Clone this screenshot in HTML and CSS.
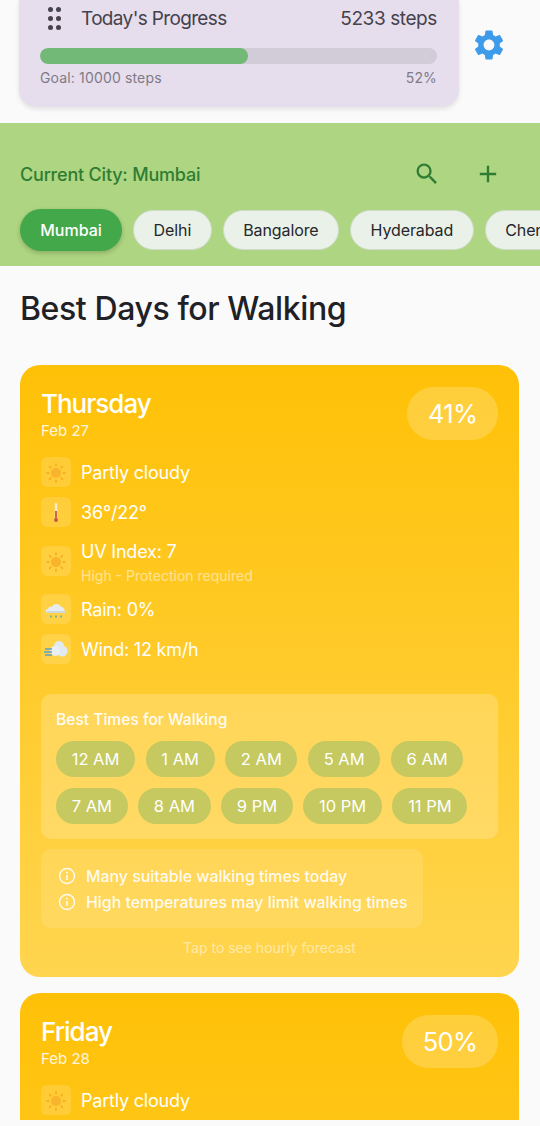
FILE: index.html
```html
<!DOCTYPE html>
<html>
<head>
    <link rel="stylesheet" href="styles.css">
    <title>Best Days for Walking</title>
</head>
<body>
<svg class="defs" width="0" height="0">
    <symbol id="sun" viewBox="0 0 30 30">
        <circle cx="15" cy="16" r="5" fill="#f8b42c"/>
        <g stroke="#f5a623" stroke-width="1.400" stroke-linecap="round">
            <path d="M15 7v1.800M15 23.200V25M6 16h1.800M22.200 16H24M8.600 9.600l1.300 1.300M20.100 21.100l1.300 1.300M21.400 9.600l-1.300 1.300M9.900 21.100l-1.300 1.300"/>
        </g>
    </symbol>
    <symbol id="thermo" viewBox="0 0 30 30">
        <rect x="13.800" y="6" width="2.400" height="18" rx="1.200" fill="#f3e9d8"/>
        <rect x="14.100" y="14" width="1.800" height="9" fill="#c8574b"/>
        <circle cx="15" cy="23" r="2" fill="#c8574b"/>
    </symbol>
    <symbol id="rain" viewBox="0 0 30 30">
        <path d="M7 19c-3 0-3-4 0-4 .5-2 2.500-3 4-2 1-4 8-4 9 0 4-.5 5 6 1 6z" fill="#e6edf2"/>
        <path d="M6 17h18v2H6z" fill="#cfd8de"/>
        <path d="M10 21.500v2M15 21.500v2M20 21.500v2" stroke="#6fb1a8" stroke-width="1.800"/>
    </symbol>
    <symbol id="wind" viewBox="0 0 30 30">
        <circle cx="18" cy="12" r="5" fill="#dfeaf2"/>
        <circle cx="21" cy="17" r="5.500" fill="#dfeaf2"/>
        <circle cx="14" cy="17" r="5" fill="#e9f0f5"/>
        <path d="M4 15h7M3 18h8M4 21h7" stroke="#5f9fc0" stroke-width="1.600"/>
    </symbol>
    <symbol id="info" viewBox="0 0 18 18">
        <circle cx="9" cy="9" r="7.500" fill="none" stroke="currentColor" stroke-width="1.400"/>
        <path d="M9 8v5" stroke="currentColor" stroke-width="1.500"/>
        <circle cx="9" cy="5.500" r="1" fill="currentColor"/>
    </symbol>
</svg>

<div class="screen">
    <div class="top-row">
        <div class="progress-card">
            <div class="progress-head">
                <span class="drag-dots"><i></i><i></i><i></i><i></i><i></i><i></i></span>
                <span class="progress-title">Today's Progress</span>
                <span class="progress-steps">5233 steps</span>
            </div>
            <div class="bar"><div class="bar-fill" style="width: 52.300%"></div></div>
            <div class="progress-foot">
                <span>Goal: 10000 steps</span>
                <span>52%</span>
            </div>
        </div>
        <svg class="gear" viewBox="0 0 24 24" width="36" height="36">
            <path fill="#3d9be9" d="M19.140 12.940c.040-.300.060-.610.060-.940 0-.320-.020-.640-.070-.940l2.030-1.580a.49.49 0 0 0 .120-.610l-1.920-3.320a.488.488 0 0 0-.590-.220l-2.390.960c-.500-.380-1.030-.700-1.620-.940l-.360-2.540a.484.484 0 0 0-.480-.410h-3.840c-.240 0-.430.170-.470.410l-.360 2.540c-.590.240-1.130.570-1.620.940l-2.390-.960c-.220-.080-.470 0-.590.220L2.740 8.870c-.120.210-.080.470.120.610l2.030 1.580c-.050.300-.090.630-.090.940s.020.640.070.940l-2.030 1.580a.49.49 0 0 0-.120.610l1.920 3.320c.120.220.370.290.590.220l2.390-.960c.500.380 1.030.700 1.620.940l.360 2.540c.050.240.240.410.480.410h3.840c.240 0 .440-.170.470-.410l.360-2.540c.590-.240 1.130-.560 1.620-.940l2.390.960c.220.080.470 0 .590-.220l1.920-3.320c.120-.220.070-.470-.120-.610l-2.010-1.580zM12 15.600c-1.980 0-3.600-1.620-3.600-3.600s1.620-3.600 3.600-3.600 3.600 1.620 3.600 3.600-1.620 3.600-3.600 3.600z"/>
        </svg>
    </div>

    <div class="city-band">
        <div class="city-head">
            <span class="city-current">Current City: Mumbai</span>
            <div class="city-actions">
                <svg viewBox="0 0 24 24" width="28" height="28"><path fill="#2e7d32" d="M15.500 14h-.790l-.280-.270A6.471 6.471 0 0 0 16 9.500 6.500 6.500 0 1 0 9.500 16c1.610 0 3.090-.590 4.230-1.570l.270.280v.790l5 4.990L20.490 19l-4.990-5zm-6 0C7.010 14 5 11.990 5 9.500S7.010 5 9.500 5 14 7.010 14 9.500 11.990 14 9.500 14z"/></svg>
                <svg viewBox="0 0 24 24" width="28" height="28"><path fill="#2e7d32" d="M19 13h-6v6h-2v-6H5v-2h6V5h2v6h6v2z"/></svg>
            </div>
        </div>
        <div class="city-chips">
            <span class="city-chip active">Mumbai</span>
            <span class="city-chip">Delhi</span>
            <span class="city-chip">Bangalore</span>
            <span class="city-chip">Hyderabad</span>
            <span class="city-chip">Chennai</span>
        </div>
    </div>

    <h1 class="page-title">Best Days for Walking</h1>

    <div class="day-card">
        <div class="day-head">
            <div>
                <div class="day-name">Thursday</div>
                <div class="day-date">Feb 27</div>
            </div>
            <div class="day-score">41%</div>
        </div>
        <div class="facts">
            <div class="fact"><span class="fact-icon"><svg><use href="#sun"/></svg></span><span class="fact-text">Partly cloudy</span></div>
            <div class="fact"><span class="fact-icon"><svg><use href="#thermo"/></svg></span><span class="fact-text">36°/22°</span></div>
            <div class="fact"><span class="fact-icon"><svg><use href="#sun"/></svg></span>
                <div class="fact-stack"><div>UV Index: 7</div><div class="fact-note">High - Protection required</div></div>
            </div>
            <div class="fact"><span class="fact-icon"><svg><use href="#rain"/></svg></span><span class="fact-text">Rain: 0%</span></div>
            <div class="fact"><span class="fact-icon"><svg><use href="#wind"/></svg></span><span class="fact-text">Wind: 12 km/h</span></div>
        </div>
        <div class="times-box">
            <div class="times-title">Best Times for Walking</div>
            <div class="times">
                <span class="time">12 AM</span>
                <span class="time">1 AM</span>
                <span class="time">2 AM</span>
                <span class="time">5 AM</span>
                <span class="time">6 AM</span>
                <span class="time">7 AM</span>
                <span class="time">8 AM</span>
                <span class="time">9 PM</span>
                <span class="time">10 PM</span>
                <span class="time">11 PM</span>
            </div>
        </div>
        <div class="tips">
            <div class="tip"><svg class="tip-icon"><use href="#info"/></svg>Many suitable walking times today</div>
            <div class="tip"><svg class="tip-icon"><use href="#info"/></svg>High temperatures may limit walking times</div>
        </div>
        <div class="tap-hint">Tap to see hourly forecast</div>
    </div>

    <div class="day-card">
        <div class="day-head">
            <div>
                <div class="day-name">Friday</div>
                <div class="day-date">Feb 28</div>
            </div>
            <div class="day-score">50%</div>
        </div>
        <div class="facts">
            <div class="fact"><span class="fact-icon"><svg><use href="#sun"/></svg></span><span class="fact-text">Partly cloudy</span></div>
        </div>
    </div>
</div>
</body>
</html>
```

FILE: styles.css
```css
html, body {
    margin: 0;
    padding: 0;
    background-color: #fafafa;
}

body {
    font-family: Inter, "Noto Sans", sans-serif;
    overflow: hidden;
}

.defs {
    display: block;
    height: 0;
}

.screen {
    width: 540px;
    height: 1120px;
    overflow: hidden;
}

.top-row {
    display: flex;
    align-items: center;
    gap: 12px;
    height: 123px;
    padding: 0 0 16px 19px;
    box-sizing: border-box;
}

.progress-card {
    width: 440px;
    height: 107px;
    padding: 0 22px 0 21px;
    box-sizing: border-box;
    background-color: #e6deec;
    border-radius: 0 0 17px 17px;
    box-shadow: 0 2px 5px rgba(0, 0, 0, 0.1);
    display: flex;
    flex-direction: column;
    color: #45414d;
}

.progress-head {
    display: flex;
    align-items: center;
    height: 48px;
    font-size: 19px;
    letter-spacing: -0.4px;
    margin-top: -6px;
}

.drag-dots {
    display: grid;
    grid-template-columns: 5px 5px;
    gap: 4px 3px;
    margin-left: 8px;
    margin-right: 20px;
}

.drag-dots i {
    width: 5px;
    height: 5px;
    border-radius: 50%;
    background-color: #45414d;
}

.progress-title {
    flex: 1;
    letter-spacing: -0.65px;
}

.bar {
    height: 16px;
    margin-top: 6px;
    border-radius: 8px;
    background-color: #d2ccd9;
    overflow: hidden;
}

.bar-fill {
    height: 100%;
    border-radius: 8px;
    background-color: #72b877;
}

.progress-foot {
    display: flex;
    justify-content: space-between;
    margin-top: 5px;
    font-size: 14px;
    letter-spacing: 0.15px;
    color: #7f7a87;
}

.gear {
    margin-top: -18px;
}

.city-band {
    height: 143px;
    padding: 36px 0 0 20px;
    box-sizing: border-box;
    background-color: #aed581;
    overflow: hidden;
}

.city-head {
    display: flex;
    align-items: center;
    justify-content: space-between;
    height: 30px;
    padding-right: 38px;
}

.city-current {
    font-size: 18px;
    font-weight: 500;
    letter-spacing: -0.2px;
    color: #2e7d32;
}

.city-actions {
    display: flex;
    gap: 33px;
}

.city-chips {
    display: flex;
    align-items: center;
    gap: 11px;
    margin-top: 20px;
    white-space: nowrap;
}

.city-chip {
    flex: none;
    height: 38px;
    line-height: 38px;
    padding: 0 19.500px;
    border: 1px solid #cfdccb;
    border-radius: 20px;
    background-color: #e9f1e8;
    font-size: 16px;
    letter-spacing: -0.1px;
    color: #26262b;
}

.city-chip.active {
    height: 42px;
    line-height: 42px;
    padding: 0 20.250px;
    border: 0;
    border-radius: 21px;
    background-color: #43a84a;
    color: #ffffff;
    font-weight: 500;
    letter-spacing: 0;
    box-shadow: 0 2px 5px rgba(0, 0, 0, 0.2);
}

.page-title {
    margin: 24px 0 37px 20px;
    font-size: 32px;
    line-height: 38px;
    font-weight: 500;
    letter-spacing: -0.4px;
    color: #1f2126;
}

.day-card {
    width: 499px;
    margin: 0 0 16px 20px;
    padding: 22px 21px 20px;
    box-sizing: border-box;
    border-radius: 20px;
    background: linear-gradient(180deg, #ffc107 0%, #ffd54f 100%);
    color: #ffffff;
}

.day-card:last-child {
    min-height: 612px;
}

.day-head {
    display: flex;
    justify-content: space-between;
    align-items: flex-start;
}

.day-name {
    font-size: 26px;
    line-height: 34px;
    font-weight: 500;
    letter-spacing: -1px;
}

.day-date {
    font-size: 15px;
    line-height: 20px;
    opacity: 0.85;
}

.day-score {
    padding: 0 20.500px;
    height: 53px;
    line-height: 53px;
    border-radius: 27px;
    background-color: rgba(255, 255, 255, 0.2);
    font-size: 25.500px;
    letter-spacing: -0.6px;
}

.facts {
    display: flex;
    flex-direction: column;
    gap: 10px;
    margin-top: 16px;
}

.fact {
    display: flex;
    align-items: center;
    gap: 10px;
    min-height: 30px;
    font-size: 18px;
    line-height: 24px;
    letter-spacing: -0.2px;
}

.fact-icon {
    flex: none;
    width: 30px;
    height: 30px;
    border-radius: 6px;
    background-color: rgba(255, 255, 255, 0.15);
}

.fact-icon svg {
    display: block;
    width: 30px;
    height: 30px;
}

.fact-text {
    padding-top: 1px;
}

.fact-stack {
    padding-top: 3px;
}

.fact-note {
    margin-top: 4px;
    font-size: 14px;
    line-height: 16px;
    letter-spacing: 0;
    opacity: 0.5;
}

.times-box {
    margin-top: 30px;
    padding: 16px 15px 15px;
    border-radius: 10px;
    background-color: rgba(255, 255, 255, 0.2);
}

.times-title {
    font-size: 15.600px;
    font-weight: 500;
    line-height: 20px;
    opacity: 0.95;
}

.times {
    display: flex;
    flex-wrap: wrap;
    gap: 11px 10.500px;
    margin-top: 11px;
    width: 425px;
}

.time {
    height: 36px;
    line-height: 36px;
    padding: 0 15.700px;
    border-radius: 18px;
    background-color: #c5c95f;
    font-size: 16.500px;
}

.tips {
    width: 382px;
    margin-top: 10px;
    padding: 14px 0 13px 17px;
    box-sizing: border-box;
    border-radius: 10px;
    background-color: rgba(255, 255, 255, 0.12);
    font-size: 15.900px;
    font-weight: 500;
    white-space: nowrap;
    color: rgba(255, 255, 255, 0.92);
}

.tip {
    display: flex;
    align-items: center;
    gap: 10px;
    height: 26px;
}

.tip-icon {
    width: 18px;
    height: 18px;
}

.tap-hint {
    margin-top: 11px;
    text-align: center;
    font-size: 14px;
    line-height: 18px;
    opacity: 0.5;
}
```
